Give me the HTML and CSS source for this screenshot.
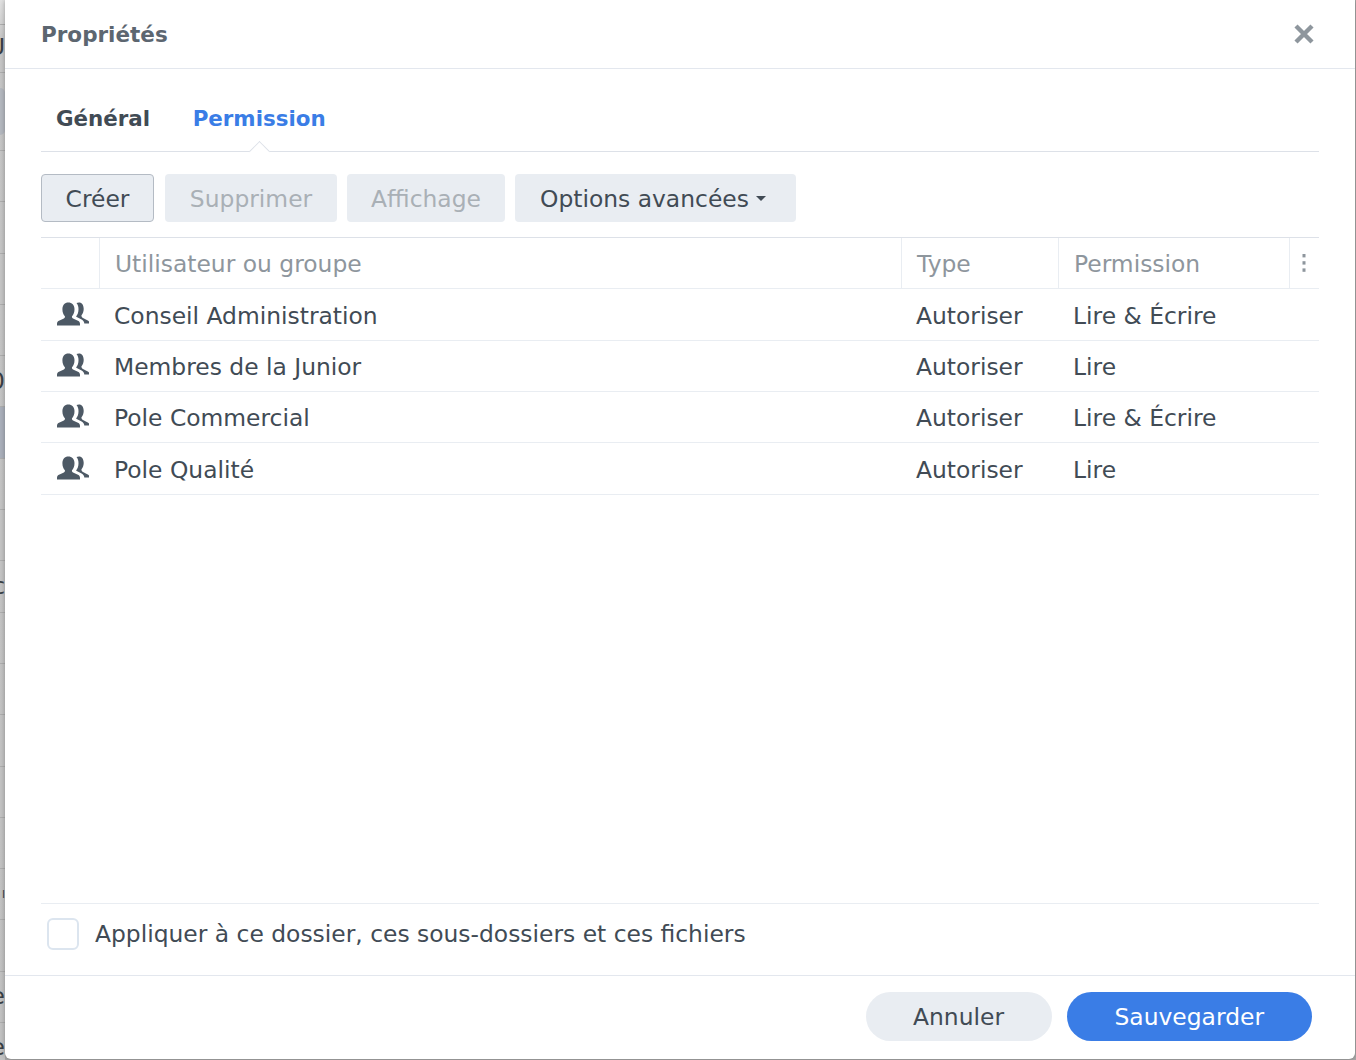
FILE: index.html
```html
<!DOCTYPE html>
<html lang="fr">
<head>
    <meta charset="UTF-8">
    <meta name="viewport" content="width=device-width, initial-scale=1.0">
    <title>Propriétés</title>
    <link rel="stylesheet" href="styles.css">
</head>
<body>
    <div class="backdrop">
        <div class="backdrop-row row-first"></div>
        <div class="backdrop-row row-second"><span>U</span></div>
        <div class="backdrop-row row-third"><div class="backdrop-box"></div></div>
        <div class="backdrop-row"></div>
        <div class="backdrop-row"></div>
        <div class="backdrop-row"></div>
        <div class="backdrop-row"></div>
        <div class="backdrop-row"><span>0</span></div>
        <div class="backdrop-row selected"></div>
        <div class="backdrop-row"></div>
        <div class="backdrop-row"></div>
        <div class="backdrop-row"><span>c</span></div>
        <div class="backdrop-row"></div>
        <div class="backdrop-row"></div>
        <div class="backdrop-row"></div>
        <div class="backdrop-row"></div>
        <div class="backdrop-row"></div>
        <div class="backdrop-row"><span class="small">l</span></div>
        <div class="backdrop-row"></div>
        <div class="backdrop-row"><span>e</span></div>
        <div class="backdrop-row"><span>e</span></div>
    </div>

    <div class="dialog">
        <div class="dialog-header">
            <div class="dialog-title">Propriétés</div>
            <svg class="close-icon" viewBox="0 0 20 20" width="20" height="20">
                <path d="M2 2 L18 18 M18 2 L2 18" stroke="#8e969d" stroke-width="4.4" fill="none"/>
            </svg>
        </div>

        <div class="dialog-body">
            <div class="tabs">
                <div class="tab">Général</div>
                <div class="tab active">Permission</div>
            </div>

            <div class="toolbar">
                <button class="btn btn-outline">Créer</button>
                <button class="btn btn-disabled btn-delete">Supprimer</button>
                <button class="btn btn-disabled btn-view">Affichage</button>
                <button class="btn btn-menu">Options avancées<span class="caret"></span></button>
            </div>

            <div class="grid">
                <div class="grid-row grid-head">
                    <div class="cell"></div>
                    <div class="cell">Utilisateur ou groupe</div>
                    <div class="cell">Type</div>
                    <div class="cell">Permission</div>
                    <div class="cell cell-menu">
                        <svg viewBox="0 0 4 20" width="4" height="20">
                            <rect x="0.5" y="1" width="3" height="3.4" fill="#8e969d"/>
                            <rect x="0.5" y="8.2" width="3" height="3.4" fill="#8e969d"/>
                            <rect x="0.5" y="15.4" width="3" height="3.4" fill="#8e969d"/>
                        </svg>
                    </div>
                </div>
                <div class="grid-row row-tall">
                    <div class="cell cell-icon">
                        <svg viewBox="0 0 32 26" width="32" height="26"><use href="#group-icon"/></svg>
                    </div>
                    <div class="cell">Conseil Administration</div>
                    <div class="cell">Autoriser</div>
                    <div class="cell">Lire &amp; Écrire</div>
                    <div class="cell"></div>
                </div>
                <div class="grid-row">
                    <div class="cell cell-icon">
                        <svg viewBox="0 0 32 26" width="32" height="26"><use href="#group-icon"/></svg>
                    </div>
                    <div class="cell">Membres de la Junior</div>
                    <div class="cell">Autoriser</div>
                    <div class="cell">Lire</div>
                    <div class="cell"></div>
                </div>
                <div class="grid-row">
                    <div class="cell cell-icon">
                        <svg viewBox="0 0 32 26" width="32" height="26"><use href="#group-icon"/></svg>
                    </div>
                    <div class="cell">Pole Commercial</div>
                    <div class="cell">Autoriser</div>
                    <div class="cell">Lire &amp; Écrire</div>
                    <div class="cell"></div>
                </div>
                <div class="grid-row row-tall">
                    <div class="cell cell-icon">
                        <svg viewBox="0 0 32 26" width="32" height="26"><use href="#group-icon"/></svg>
                    </div>
                    <div class="cell">Pole Qualité</div>
                    <div class="cell">Autoriser</div>
                    <div class="cell">Lire</div>
                    <div class="cell"></div>
                </div>
            </div>

            <label class="apply-row">
                <span class="checkbox"></span>
                <span>Appliquer à ce dossier, ces sous-dossiers et ces fichiers</span>
            </label>
        </div>

        <div class="dialog-footer">
            <button class="pill pill-cancel">Annuler</button>
            <button class="pill pill-primary">Sauvegarder</button>
        </div>
    </div>

    <svg class="icon-defs" width="0" height="0">
        <symbol id="group-icon" viewBox="0 0 32 26">
            <path fill="#4d5965" d="M11.300 0.500c-3.500 0-5.900 2.700-5.900 6.800 0 3 1 5.500 2.500 7 .2 1-.1 1.800-1 2.200L1.400 19C.5 19.500 0 20.800 0 22v1.500h23V22c0-1.200-.6-2.500-1.500-3l-5.500-2.500c-.9-.4-1.200-1.200-1-2.200 1.500-1.500 2.500-4 2.500-7 0-4.100-2.600-6.800-6.200-6.800z"/>
            <path fill="#4d5965" d="M22 0.500c-.9 0-1.800.2-2.500.6 1.300 1.500 2 3.600 2 6.200 0 3-1 5.600-2.400 7.200.1.300.3.500.6.600l4.900 2.300c1.600.8 2.600 2.300 2.700 4.200h5c.1-1.700-.4-2.600-1.500-3.200l-5.300-2.700c-.9-.5-1.200-1.500-1-2.400 1.300-1.400 2.200-3.800 2.200-6.300 0-3.800-1.800-6.500-4.700-6.500z"/>
        </symbol>
    </svg>
</body>
</html>
```

FILE: styles.css
```css
* {
    margin: 0;
    padding: 0;
    box-sizing: border-box;
}

body {
    font-family: 'DejaVu Sans', 'Liberation Sans', sans-serif;
    font-size: 23.4px;
    color: #414b55;
    background: #a9a9a9;
    width: 1356px;
    height: 1060px;
    overflow: hidden;
    display: flex;
    align-items: flex-start;
}

.icon-defs {
    position: absolute;
}

/* page behind the dialog, only a thin strip shows */
.backdrop {
    width: 5px;
    height: 1060px;
    overflow: hidden;
    flex-shrink: 0;
    background: linear-gradient(180deg, #e2e2e2 0, #c6c6c6 40px, #c2c2c2 100%);
}

.backdrop-row {
    height: 51.3px;
    border-bottom: 1px solid #aeaeae;
    display: flex;
    justify-content: flex-end;
    align-items: center;
    color: #3a3f45;
    line-height: 1;
}

.backdrop-row span {
    flex-shrink: 0;
}

.backdrop-row .small {
    font-size: 11px;
}

.row-first {
    height: 25px;
}

.row-second {
    height: 48px;
    padding-bottom: 2px;
}

.row-third {
    height: 78px;
}

.backdrop-box {
    width: 100%;
    height: 47px;
    flex-shrink: 0;
    background: #b4b8bf;
    border-radius: 0 5px 5px 0;
}

.backdrop-row.selected {
    background: #aab0bb;
}

.dialog {
    width: 1350px;
    height: 1059px;
    flex-shrink: 0;
    background: #fff;
    border-radius: 0 0 6px 6px;
    display: flex;
    flex-direction: column;
    box-shadow: 0 0 5px rgba(0, 0, 0, 0.3);
}

.dialog-header {
    height: 69px;
    flex-shrink: 0;
    padding: 0 41px 0 36px;
    border-bottom: 1px solid #e3e7ee;
    display: flex;
    align-items: center;
    justify-content: space-between;
}

.dialog-title {
    font-size: 21.5px;
    font-weight: bold;
    color: #5c6670;
}

.dialog-body {
    flex: 1;
    padding: 0 36px;
    display: flex;
    flex-direction: column;
}

.tabs {
    height: 83px;
    flex-shrink: 0;
    padding: 17px 15px 0;
    border-bottom: 1px solid #dde1e8;
    display: flex;
    align-items: center;
    gap: 42.5px;
}

.tab {
    font-size: 21.4px;
    font-weight: bold;
    color: #414b55;
    position: relative;
}

.tab.active {
    color: #3a7de6;
}

.tab.active::after {
    content: '';
    position: absolute;
    left: 50%;
    bottom: -28px;
    width: 14px;
    height: 14px;
    margin-left: -7px;
    background: #fff;
    border-left: 1px solid #dde1e8;
    border-top: 1px solid #dde1e8;
    transform: rotate(45deg);
}

.toolbar {
    display: flex;
    gap: 10px;
    margin-top: 22px;
    flex-shrink: 0;
}

.btn {
    height: 48px;
    padding: 1px 0 0;
    border: 0;
    border-radius: 4px;
    background: #e9edf2;
    font: inherit;
    color: #414b55;
    display: flex;
    align-items: center;
    justify-content: center;
}

.btn-outline {
    width: 113px;
    margin-right: 1px;
    border: 1px solid #b4bbc4;
}

.btn-disabled {
    color: #a9b0b6;
}

.btn-delete {
    width: 172px;
}

.btn-view {
    width: 158px;
}

.btn-menu {
    width: 281px;
    padding-left: 25px;
    padding-right: 30px;
    justify-content: space-between;
}

.caret {
    width: 0;
    height: 0;
    margin-top: -1px;
    border-left: 5.500px solid transparent;
    border-right: 5.500px solid transparent;
    border-top: 5px solid #414b55;
}

.grid {
    margin-top: 15px;
    border-top: 1px solid #dde1e8;
    flex: 1;
}

.grid-row {
    display: grid;
    grid-template-columns: 58px 802px 157px 231px 30px;
    height: 51px;
    border-bottom: 1px solid #e9edf2;
}

.grid-row.row-tall {
    height: 52px;
}

.grid-head {
    color: #8e969d;
}

.grid-head .cell + .cell {
    border-left: 1px solid #e9edf2;
}

.cell {
    padding: 2px 0 0 15px;
    display: flex;
    align-items: center;
    white-space: nowrap;
}

.cell-icon {
    padding: 0 0 0 16px;
}

.cell-menu {
    padding: 0 0 0 12px;
}

.apply-row {
    height: 72px;
    flex-shrink: 0;
    padding: 0 0 12px 6px;
    border-top: 1px solid #e9edf2;
    display: flex;
    align-items: center;
    gap: 16px;
}

.checkbox {
    width: 32px;
    height: 32px;
    border: 2px solid #dce5ef;
    border-radius: 6px;
}

.dialog-footer {
    height: 84px;
    flex-shrink: 0;
    padding: 16px 43px 0 0;
    border-top: 1px solid #e3e7ee;
    display: flex;
    justify-content: flex-end;
    align-items: flex-start;
    gap: 15px;
}

.pill {
    height: 49px;
    padding: 0 48px;
    border: 0;
    border-radius: 25px;
    background: #e9edf2;
    font: inherit;
    color: #414b55;
}

.pill-cancel {
    width: 186px;
    padding: 0;
}

.pill-primary {
    background: #3a7de6;
    color: #fff;
}
```
